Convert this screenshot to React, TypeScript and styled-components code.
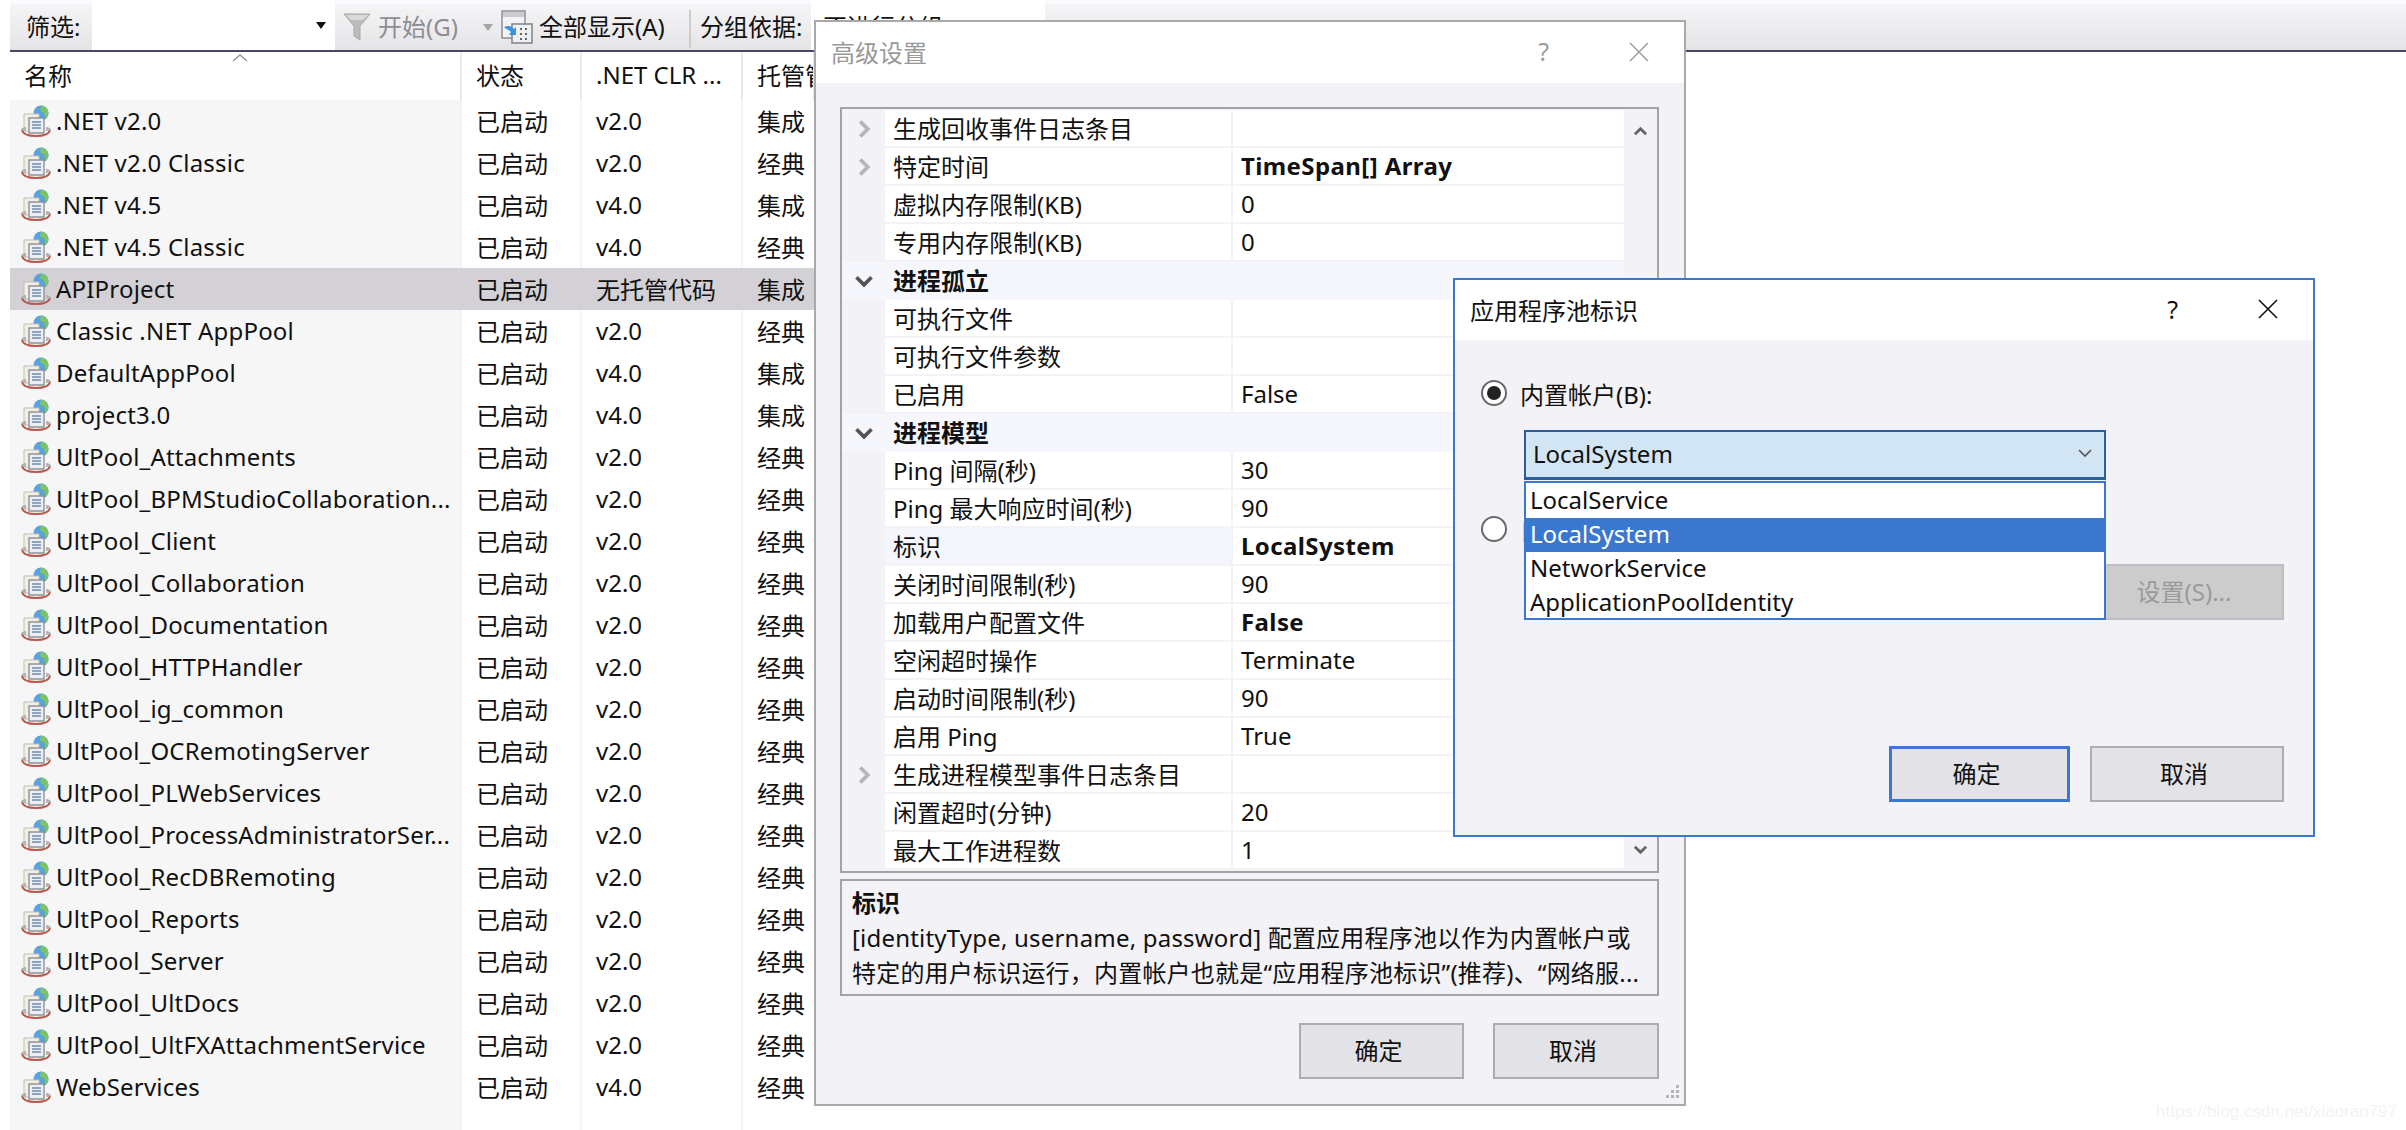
import React from 'react';
import styled, { createGlobalStyle } from 'styled-components';

const FONT = `"Noto Sans", "Noto Sans CJK SC", sans-serif`;

const GlobalStyle = createGlobalStyle`
  html, body {
    margin: 0;
    padding: 0;
    background: #fff;
    overflow: hidden;
  }
  * { box-sizing: border-box; }
`;

const Page = styled.div`
  position: relative;
  width: 2406px;
  height: 1130px;
  background: #fff;
  font-family: ${FONT};
  font-size: 24px;
  color: #111;
  overflow: hidden;
`;

/* ---- toolbar ---- */

const Toolbar = styled.div`
  display: flex;
  align-items: stretch;
  height: 52px;
  margin-left: 10px;
  padding-top: 4px;
  border-bottom: 2px solid #4a4668;
  background: linear-gradient(#f6f5f7, #ecebed 60%, #e4e4e6);
  box-shadow: inset 0 4px 0 #fcfafe;
`;

const ToolText = styled.span<{ $muted?: boolean; $left: number; $width?: number }>`
  display: flex;
  align-items: center;
  flex: none;
  width: ${p => (p.$width ? `${p.$width}px` : 'auto')};
  margin-left: ${p => p.$left}px;
  padding-bottom: 3px;
  color: ${p => (p.$muted ? '#8d8d93' : '#111')};
  white-space: nowrap;
`;

const FilterInput = styled.div`
  display: flex;
  align-items: center;
  justify-content: flex-end;
  width: 243px;
  margin: -4px 0 0 0;
  padding-right: 9px;
  background: #fff;
`;

const Caret = styled.span<{ $color: string; $left?: number }>`
  align-self: center;
  flex: none;
  width: 0;
  height: 0;
  margin-left: ${p => p.$left ?? 0}px;
  border-left: 5px solid transparent;
  border-right: 5px solid transparent;
  border-top: 7px solid ${p => p.$color};
`;

const ToolIcon = styled.svg<{ $left: number }>`
  align-self: center;
  flex: none;
  margin-left: ${p => p.$left}px;
`;

const ToolDivider = styled.span`
  flex: none;
  width: 2px;
  margin: 6px 0 2px 0;
  background: #cfccc4;
`;

const GroupCombo = styled.div`
  display: flex;
  align-items: center;
  flex: none;
  width: 234px;
  margin: -4px 0 0 0;
  padding-left: 12px;
  background: #fff;
`;

/* ---- app pool list ---- */

const columns = '452px 120px 161px 72px';

const List = styled.div`
  margin-left: 10px;
  width: 805px;
  height: 1078px;
  background: linear-gradient(
    90deg,
    #f6f6f6 450px,
    #eef3fa 450px 452px,
    #fff 452px 570px,
    #f2f5fb 570px 572px,
    #fff 572px 731px,
    #f2f5fb 731px 733px,
    #fff 733px
  );
`;

const HeaderRow = styled.div`
  position: relative;
  display: grid;
  grid-template-columns: ${columns};
  height: 48px;
  padding-bottom: 0;
  background: #fff;
`;

const HeaderCell = styled.div`
  display: flex;
  align-items: center;
  padding: 0 0 3px 14px;
  border-right: 2px solid #e8e8e8;
  white-space: nowrap;
  overflow: hidden;

  &:last-child { border-right: 0; }
`;

const SortMark = styled.svg`
  position: absolute;
  left: 221px;
  top: 1px;
`;

const PoolRow = styled.div<{ $selected?: boolean }>`
  display: grid;
  grid-template-columns: ${columns};
  height: 42px;
  background: ${p => (p.$selected ? '#d3d1d5' : 'transparent')};
`;

const NameCell = styled.div`
  display: flex;
  align-items: center;
  gap: 4px;
  padding-left: 10px;
  white-space: nowrap;
  overflow: hidden;
`;

const NameText = styled.span`
  padding-bottom: 2px;
  letter-spacing: 0.2px;
`;

const PoolCell = styled.div`
  display: flex;
  align-items: center;
  padding: 0 0 2px 14px;
  white-space: nowrap;
  overflow: hidden;
`;

/* ---- windows ---- */

const Window = styled.div<{ $x: number; $y: number; $w: number; $h: number; $active?: boolean }>`
  position: absolute;
  left: ${p => p.$x}px;
  top: ${p => p.$y}px;
  width: ${p => p.$w}px;
  height: ${p => p.$h}px;
  display: flex;
  flex-direction: column;
  border: 2px solid ${p => (p.$active ? '#3a78cf' : '#a9a9a9')};
  background: #f3f2f6;
`;

const TitleBar = styled.div<{ $h: number; $pad: number; $muted?: boolean }>`
  display: flex;
  align-items: center;
  flex: none;
  height: ${p => p.$h}px;
  padding: 0 0 2px ${p => p.$pad}px;
  background: #fff;
  color: ${p => (p.$muted ? '#999' : '#111')};
`;

const TitleButtons = styled.div`
  display: flex;
  align-items: center;
  gap: 80px;
  margin-left: auto;
  margin-right: 35px;
`;

const Question = styled.span`
  font-size: 25px;
  line-height: 1;
`;

const AdvancedBody = styled.div`
  position: relative;
  display: flex;
  flex-direction: column;
  flex: 1;
  padding: 24px 25px 0 24px;
`;

const PropertyGrid = styled.div`
  display: grid;
  grid-template-columns: 1fr 33px;
  height: 766px;
  flex: none;
  padding-top: 1px;
  border: 2px solid #a3a3a3;
  background: #f3f2f6;
`;

const PropertyRows = styled.div`
  display: flex;
  flex-direction: column;
`;

const PropertyRow = styled.div<{ $category?: boolean }>`
  display: grid;
  grid-template-columns: 43px 348px 1fr;
  height: 38px;
  flex: none;
  background: ${p => (p.$category ? '#f6f7fc' : 'transparent')};
`;

const Gutter = styled.div`
  display: flex;
  align-items: center;
  justify-content: center;
`;

const PropName = styled.div<{ $category?: boolean; $selected?: boolean }>`
  display: flex;
  align-items: center;
  height: 36px;
  margin-right: 2px;
  padding: 0 0 2px 8px;
  background: ${p => (p.$category ? 'transparent' : p.$selected ? '#f5f6fb' : '#fff')};
  font-weight: ${p => (p.$category ? 700 : 400)};
  white-space: nowrap;
`;

const PropValue = styled.div<{ $bold?: boolean; $category?: boolean }>`
  display: flex;
  align-items: center;
  height: 36px;
  padding: 0 0 2px 8px;
  background: ${p => (p.$category ? 'transparent' : '#fff')};
  font-weight: ${p => (p.$bold ? 700 : 400)};
  letter-spacing: ${p => (p.$bold ? '0.4px' : '0')};
  white-space: nowrap;
`;

const ScrollTrack = styled.div`
  display: flex;
  flex-direction: column;
  justify-content: space-between;
  align-items: center;
  padding: 14px 0 14px;
`;

const DescriptionBox = styled.div`
  flex: none;
  height: 117px;
  margin-top: 6px;
  padding: 4px 0 0 10px;
  border: 2px solid #a3a3a3;
  line-height: 35px;
  white-space: nowrap;
  overflow: hidden;
`;

const DescTitle = styled.div`
  font-weight: 700;
`;

const DescLine = styled.div`
  letter-spacing: 0.2px;
`;

const ButtonRow = styled.div<{ $top: number; $gap: number }>`
  display: flex;
  justify-content: flex-end;
  gap: ${p => p.$gap}px;
  margin-top: ${p => p.$top}px;
`;

const DialogButton = styled.button<{ $w: number; $h: number; $primary?: boolean }>`
  width: ${p => p.$w}px;
  height: ${p => p.$h}px;
  padding: 0 6px 3px 0;
  border: ${p => (p.$primary ? '3px solid #3a78cf' : '2px solid #adadad')};
  border-radius: 0;
  background: #e3e2e6;
  color: #111;
  font-family: ${FONT};
  font-size: 24px;
`;

const Grip = styled.svg`
  position: absolute;
  right: 3px;
  bottom: 3px;
`;

/* ---- identity dialog ---- */

const IdentityBody = styled.div`
  display: flex;
  flex-direction: column;
  flex: 1;
  padding: 40px 29px 0 26px;
`;

const RadioRow = styled.div<{ $top?: number }>`
  display: flex;
  align-items: center;
  gap: 13px;
  height: 26px;
  margin-top: ${p => p.$top ?? 0}px;
  white-space: nowrap;
`;

const Radio = styled.span<{ $checked?: boolean }>`
  position: relative;
  flex: none;
  width: 26px;
  height: 26px;
  border: 2px solid #6a6a6a;
  border-radius: 50%;
  background: #fff;

  &::after {
    content: '';
    display: ${p => (p.$checked ? 'block' : 'none')};
    position: absolute;
    inset: 4px;
    border-radius: 50%;
    background: #222;
  }
`;

const ComboWrap = styled.div`
  position: relative;
  width: 582px;
  margin: 24px 0 0 43px;
`;

const ComboBox = styled.div`
  display: flex;
  align-items: center;
  justify-content: space-between;
  height: 50px;
  padding: 0 11px 3px 7px;
  border: 2px solid #2a5f9e;
  border-bottom-width: 3px;
  background: #d1e5f4;
`;

const ComboList = styled.div`
  position: absolute;
  top: 51px;
  left: 0;
  width: 100%;
  height: 139px;
  padding: 1px 0;
  border: 2px solid #3a78cf;
  background: #fff;
  z-index: 2;
`;

const ComboItem = styled.div<{ $selected?: boolean }>`
  display: flex;
  align-items: center;
  height: 34px;
  padding: 0 0 4px 4px;
  background: ${p => (p.$selected ? '#3a78cf' : 'transparent')};
  color: ${p => (p.$selected ? '#fff' : '#111')};
`;

const SettingsButton = styled.button`
  align-self: flex-end;
  width: 200px;
  height: 56px;
  margin-top: 22px;
  padding: 0 0 3px;
  border: 2px solid #bfbfbf;
  border-radius: 0;
  background: #cccccc;
  color: #9a9a9a;
  font-family: ${FONT};
  font-size: 24px;
`;

const Watermark = styled.div`
  position: absolute;
  right: 9px;
  bottom: 8px;
  font-family: "Liberation Sans", sans-serif;
  font-size: 17px;
  color: #f3f3f3;
`;

/* ---- drawings ---- */

const PoolIcon: React.FC = () => (
  <svg width="32" height="32" viewBox="0 0 32 32" style={{ flex: 'none' }}>
    <circle cx="21" cy="8" r="7.5" fill="#5aa2dd" />
    <path d="M21 .5a7.5 7.5 0 0 1 7.5 7.5c0 2.5-1 4.5-2.5 5.5l-2-6-4-2z" fill="#7cc36a" />
    <path d="M4 9h15v17H4z" fill="#f4efe4" stroke="#c4bfb5" strokeWidth="1" />
    <path d="M9 13h15v15H9z" fill="#eceef1" stroke="#8f9296" strokeWidth="1.4" />
    <path d="M12 17h9M12 20h9M12 23h9" stroke="#6d8db0" strokeWidth="1.5" />
    <path d="M2 25c1 5 7 6 14 6s13-1 14-6" fill="none" stroke="#b9584c" strokeWidth="2" />
    <path d="M1 25c0-2 3-3 5-3v4zM31 25c0-2-3-3-5-3v4z" fill="#b2b2b2" />
  </svg>
);

const Funnel: React.FC = () => (
  <ToolIcon $left={8} width="28" height="30" viewBox="0 0 28 30">
    <path d="M1 2h26L17 14v14l-6-4V14z" fill="#bcbcbc" stroke="#a9a9a9" strokeWidth="1" />
    <path d="M3 3h22l-5 5H8z" fill="#dadada" />
  </ToolIcon>
);

const ShowAllIcon: React.FC = () => (
  <ToolIcon $left={8} width="32" height="34" viewBox="0 0 32 34">
    <rect x="1" y="1" width="23" height="27" fill="#f1f3f6" stroke="#8f8f8f" strokeWidth="1.5" />
    <rect x="2" y="2" width="21" height="5" fill="#c9cbd0" />
    <rect x="11" y="14" width="20" height="19" fill="#eef0f2" stroke="#7f8386" strokeWidth="1.5" />
    <path d="M19 19h2M24 19h2M19 24h2M24 24h2M19 29h2M24 29h2" stroke="#666" strokeWidth="2" />
    <path d="M3 17c4-2 8-1 10 2l2-2v8h-7l2-3c-2-2-5-3-7-5z" fill="#3d94dc" />
  </ToolIcon>
);

const Chevron: React.FC<{ dir: 'right' | 'down' | 'up'; color: string; size?: number; width?: number }> = ({ dir, color, size = 16, width = 3 }) => {
  const points = { right: '5,2 11,8 5,14', down: '2,5 8,11 14,5', up: '2,11 8,5 14,11' }[dir];
  return (
    <svg width={size} height={size} viewBox="0 0 16 16">
      <polyline points={points} fill="none" stroke={color} strokeWidth={width} />
    </svg>
  );
};

const CloseMark: React.FC<{ color: string }> = ({ color }) => (
  <svg width="20" height="20" viewBox="0 0 20 20">
    <path d="M1 1l18 18M19 1L1 19" stroke={color} strokeWidth="1.6" fill="none" />
  </svg>
);

/* ---- data ---- */

const pools: [string, string, string][] = [
  ['.NET v2.0', 'v2.0', '集成'],
  ['.NET v2.0 Classic', 'v2.0', '经典'],
  ['.NET v4.5', 'v4.0', '集成'],
  ['.NET v4.5 Classic', 'v4.0', '经典'],
  ['APIProject', '无托管代码', '集成'],
  ['Classic .NET AppPool', 'v2.0', '经典'],
  ['DefaultAppPool', 'v4.0', '集成'],
  ['project3.0', 'v4.0', '集成'],
  ['UltPool_Attachments', 'v2.0', '经典'],
  ['UltPool_BPMStudioCollaboration...', 'v2.0', '经典'],
  ['UltPool_Client', 'v2.0', '经典'],
  ['UltPool_Collaboration', 'v2.0', '经典'],
  ['UltPool_Documentation', 'v2.0', '经典'],
  ['UltPool_HTTPHandler', 'v2.0', '经典'],
  ['UltPool_ig_common', 'v2.0', '经典'],
  ['UltPool_OCRemotingServer', 'v2.0', '经典'],
  ['UltPool_PLWebServices', 'v2.0', '经典'],
  ['UltPool_ProcessAdministratorSer...', 'v2.0', '经典'],
  ['UltPool_RecDBRemoting', 'v2.0', '经典'],
  ['UltPool_Reports', 'v2.0', '经典'],
  ['UltPool_Server', 'v2.0', '经典'],
  ['UltPool_UltDocs', 'v2.0', '经典'],
  ['UltPool_UltFXAttachmentService', 'v2.0', '经典'],
  ['WebServices', 'v4.0', '经典'],
];

type Prop = {
  name: string;
  value?: string;
  bold?: boolean;
  kind?: 'category' | 'collapsed';
  selected?: boolean;
};

const props: Prop[] = [
  { name: '生成回收事件日志条目', kind: 'collapsed' },
  { name: '特定时间', value: 'TimeSpan[] Array', bold: true, kind: 'collapsed' },
  { name: '虚拟内存限制(KB)', value: '0' },
  { name: '专用内存限制(KB)', value: '0' },
  { name: '进程孤立', kind: 'category' },
  { name: '可执行文件' },
  { name: '可执行文件参数' },
  { name: '已启用', value: 'False' },
  { name: '进程模型', kind: 'category' },
  { name: 'Ping 间隔(秒)', value: '30' },
  { name: 'Ping 最大响应时间(秒)', value: '90' },
  { name: '标识', value: 'LocalSystem', bold: true, selected: true },
  { name: '关闭时间限制(秒)', value: '90' },
  { name: '加载用户配置文件', value: 'False', bold: true },
  { name: '空闲超时操作', value: 'Terminate' },
  { name: '启动时间限制(秒)', value: '90' },
  { name: '启用 Ping', value: 'True' },
  { name: '生成进程模型事件日志条目', kind: 'collapsed' },
  { name: '闲置超时(分钟)', value: '20' },
  { name: '最大工作进程数', value: '1' },
];

const identities = ['LocalService', 'LocalSystem', 'NetworkService', 'ApplicationPoolIdentity'];

const App: React.FC = () => (
  <Page>
    <GlobalStyle />

    <Toolbar>
      <ToolText $left={16} $width={66}>筛选:</ToolText>
      <FilterInput>
        <Caret $color="#111" />
      </FilterInput>
      <Funnel />
      <ToolText $muted $left={7} $width={96}>开始(G)</ToolText>
      <Caret $color="#a5a5a5" $left={9} />
      <ShowAllIcon />
      <ToolText $left={6} $width={150}>全部显示(A)</ToolText>
      <ToolDivider />
      <ToolText $left={9} $width={111}>分组依据:</ToolText>
      <GroupCombo>不进行分组</GroupCombo>
    </Toolbar>

    <List>
      <HeaderRow>
        <HeaderCell>名称</HeaderCell>
        <HeaderCell>状态</HeaderCell>
        <HeaderCell>.NET CLR ...</HeaderCell>
        <HeaderCell>托管管道模式</HeaderCell>
        <SortMark width="18" height="10" viewBox="0 0 18 10">
          <polyline points="2,8 9,2 16,8" fill="none" stroke="#9a9a9a" strokeWidth="1.6" />
        </SortMark>
      </HeaderRow>
      {pools.map(([name, clr, mode]) => (
        <PoolRow key={name} $selected={name === 'APIProject'}>
          <NameCell>
            <PoolIcon />
            <NameText>{name}</NameText>
          </NameCell>
          <PoolCell>已启动</PoolCell>
          <PoolCell>{clr}</PoolCell>
          <PoolCell>{mode}</PoolCell>
        </PoolRow>
      ))}
    </List>

    <Window $x={814} $y={20} $w={872} $h={1086}>
      <TitleBar $h={61} $pad={15} $muted>
        高级设置
        <TitleButtons>
          <Question>?</Question>
          <CloseMark color="#a0a0a0" />
        </TitleButtons>
      </TitleBar>
      <AdvancedBody>
        <PropertyGrid>
          <PropertyRows>
            {props.map(p => (
              <PropertyRow key={p.name} $category={p.kind === 'category'}>
                <Gutter>
                  {p.kind === 'category' && <Chevron dir="down" color="#555" size={20} />}
                  {p.kind === 'collapsed' && <Chevron dir="right" color="#b5b5b5" size={20} />}
                </Gutter>
                <PropName $category={p.kind === 'category'} $selected={p.selected}>{p.name}</PropName>
                <PropValue $bold={p.bold} $category={p.kind === 'category'}>{p.value}</PropValue>
              </PropertyRow>
            ))}
          </PropertyRows>
          <ScrollTrack>
            <Chevron dir="up" color="#666" size={15} />
            <Chevron dir="down" color="#666" size={15} />
          </ScrollTrack>
        </PropertyGrid>
        <DescriptionBox>
          <DescTitle>标识</DescTitle>
          <DescLine>[identityType, username, password] 配置应用程序池以作为内置帐户或</DescLine>
          <DescLine>特定的用户标识运行，内置帐户也就是“应用程序池标识”(推荐)、“网络服...</DescLine>
        </DescriptionBox>
        <ButtonRow $top={27} $gap={29}>
          <DialogButton $w={165} $h={56}>确定</DialogButton>
          <DialogButton $w={166} $h={56}>取消</DialogButton>
        </ButtonRow>
        <Grip width="18" height="18" viewBox="0 0 18 18">
          <path d="M13 2h3v3h-3zM13 7h3v3h-3zM8 7h3v3H8zM13 12h3v3h-3zM8 12h3v3H8zM3 12h3v3H3z" fill="#b5b5b5" />
        </Grip>
      </AdvancedBody>
    </Window>

    <Window $x={1453} $y={278} $w={862} $h={559} $active>
      <TitleBar $h={60} $pad={15}>
        应用程序池标识
        <TitleButtons>
          <Question>?</Question>
          <CloseMark color="#111" />
        </TitleButtons>
      </TitleBar>
      <IdentityBody>
        <RadioRow>
          <Radio $checked />
          内置帐户(B):
        </RadioRow>
        <ComboWrap>
          <ComboBox>
            LocalSystem
            <Chevron dir="down" color="#555" size={16} width={1.6} />
          </ComboBox>
          <ComboList>
            {identities.map(item => (
              <ComboItem key={item} $selected={item === 'LocalSystem'}>{item}</ComboItem>
            ))}
          </ComboList>
        </ComboWrap>
        <RadioRow $top={36}>
          <Radio />
          自定义帐户(C):
        </RadioRow>
        <SettingsButton disabled>设置(S)...</SettingsButton>
        <ButtonRow $top={126} $gap={20}>
          <DialogButton $w={181} $h={56} $primary>确定</DialogButton>
          <DialogButton $w={194} $h={56}>取消</DialogButton>
        </ButtonRow>
      </IdentityBody>
    </Window>

    <Watermark>https://blog.csdn.net/xiaoran797</Watermark>
  </Page>
);

export default App;
